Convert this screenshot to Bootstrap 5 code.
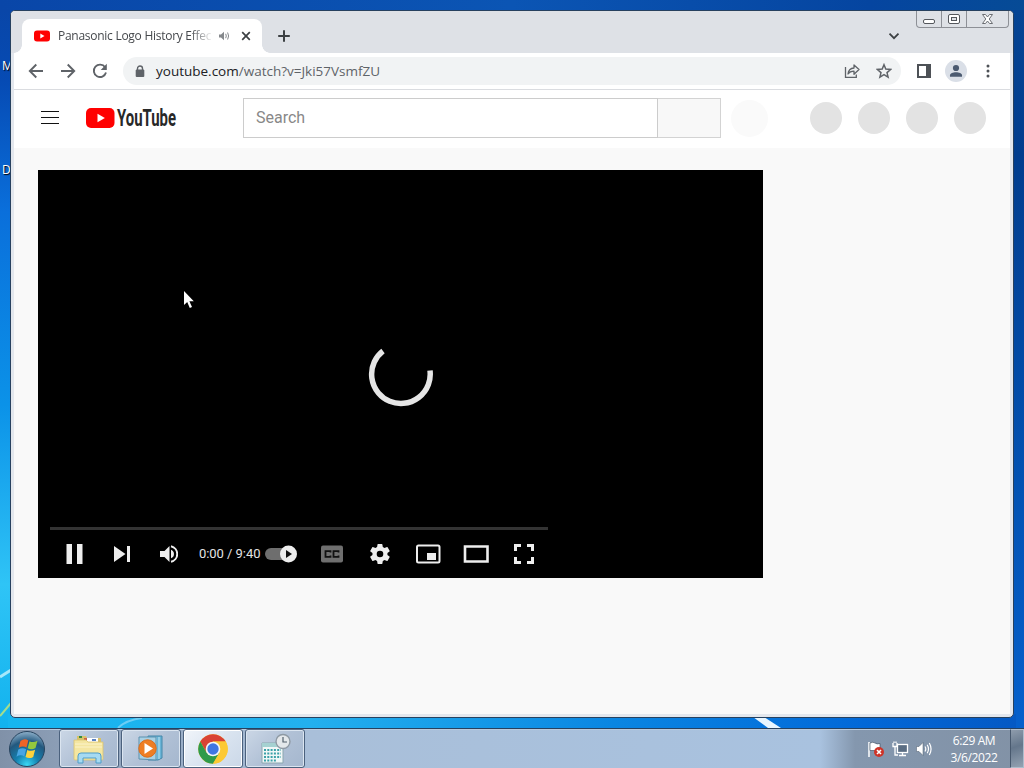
<!DOCTYPE html>
<html lang="en">
<head>
    <meta charset="UTF-8">
    <meta name="viewport" content="width=device-width, initial-scale=1.0">
    <title>Panasonic Logo History Effects - YouTube</title>
    <link href="https://cdn.jsdelivr.net/npm/bootstrap@5.3.3/dist/css/bootstrap.min.css" rel="stylesheet" />
    <style>
        body {
            width: 1024px;
            height: 768px;
            overflow: hidden;
            background-color: #0757b8;
            font-family: "Open Sans", "Noto Sans", sans-serif;
            font-size: 12px;
        }

        svg {
            display: block;
            flex-shrink: 0;
        }

        .wallpaper,
        .pointer,
        .desk-label,
        .browser {
            position: absolute;
        }

        .wallpaper {
            left: 0;
            top: 0;
        }

        .desk-label {
            left: 2px;
            color: #fff;
            text-shadow: 1px 1px 1px #000;
        }

        /* Browser window */
        .browser {
            left: 10px;
            top: 10px;
            width: 1004px;
            height: 708px;
            padding: 0 3px 3px 3px;
            border: 1px solid #27415f;
            border-radius: 5px;
            background-color: #e3e7ed;
            overflow: hidden;
        }

        .tab-strip {
            height: 42px;
            margin: 0 -3px;
            padding: 8px 0 0 11px;
            background-color: #dee1e6;
        }

        .page-tab {
            position: relative;
            width: 240px;
            height: 34px;
            padding-left: 12px;
            background-color: #fff;
            border-radius: 8px 8px 0 0;
            color: #45484c;
        }

        /* flared bottom corners of the tab */
        .page-tab::before,
        .page-tab::after {
            content: "";
            position: absolute;
            bottom: 0;
            width: 8px;
            height: 8px;
        }

        .page-tab::before {
            left: -8px;
            background: radial-gradient(circle at 0 0, #dee1e6 7.5px, #fff 8px);
        }

        .page-tab::after {
            right: -8px;
            background: radial-gradient(circle at 100% 0, #dee1e6 7.5px, #fff 8px);
        }

        .tab-name {
            width: 153px;
            margin-left: 8px;
            overflow: hidden;
            white-space: nowrap;
            letter-spacing: -0.27px;
            -webkit-mask-image: linear-gradient(to right, #000 132px, transparent 155px);
            mask-image: linear-gradient(to right, #000 132px, transparent 155px);
        }

        .win-buttons {
            width: 93px;
            height: 17px;
            margin: -8px 4px 0 0;
            border: 1px solid #8d9096;
            border-top: 0;
            border-radius: 0 0 4px 4px;
        }

        .win-buttons div + div {
            border-left: 1px solid #8d9096;
        }

        .toolbar {
            height: 37px;
            padding-left: 6px;
            background-color: #fff;
            border-bottom: 1px solid #dadce0;
        }

        .tool {
            width: 32px;
            height: 28px;
            display: flex;
            align-items: center;
            justify-content: center;
        }

        .omnibox {
            width: 778px;
            height: 28px;
            margin: 0 7px;
            padding: 0 1px;
            border-radius: 14px;
            background-color: #f1f3f4;
            color: #5f6368;
            font-size: 13.5px;
        }

        .omnibox b {
            font-weight: 400;
            color: #202124;
        }

        /* Page header */
        .masthead {
            height: 58px;
            padding: 0 0 2px 27px;
            background-color: #fff;
        }

        .search-box {
            width: 415px;
            height: 40px;
            padding-left: 12px;
            border: 1px solid #ccc;
            font-family: Roboto, sans-serif;
            font-size: 16px;
            color: #888;
        }

        .search-go {
            width: 63px;
            height: 40px;
            border: 1px solid #d3d3d3;
            border-left: 0;
            background-color: #f8f8f8;
        }

        .mic {
            width: 37px;
            height: 37px;
            background-color: #fafafa;
        }

        .bubble {
            width: 32px;
            height: 32px;
            background-color: #e3e3e3;
        }

        .page-body {
            height: 566px;
            padding: 22px 24px;
            background-color: #f9f9f9;
        }

        /* Player */
        .player {
            width: 725px;
            height: 408px;
            padding: 0 12px;
            background-color: #000;
        }

        .spinner-area {
            height: 357px;
            padding-top: 52px;
        }

        .seek {
            width: 498px;
            height: 3px;
            background-color: #333;
        }

        .controls {
            width: 498px;
            height: 48px;
        }

        .control {
            width: 48px;
            display: flex;
            align-items: center;
            justify-content: center;
        }

        .clock-text {
            width: 66px;
            padding-left: 5px;
            font-family: Roboto, sans-serif;
            font-size: 13px;
            letter-spacing: -0.05px;
            white-space: nowrap;
            color: #e4e4e4;
        }

        .pointer {
            left: 183px;
            top: 290px;
        }

        /* Taskbar */
        .taskbar {
            height: 40px;
            border-top: 1px solid #27415f;
            background: linear-gradient(to right, #8091a8 0, #8c9eb6 60px, #a9bfd9 310px, #a9c2df 820px, #8497ae 855px, #8292a6 1024px);
            box-shadow: inset 0 1px 0 #b8cade;
        }

        .orb {
            width: 59px;
            padding-left: 8px;
        }

        .task {
            width: 60px;
            height: 39px;
            margin-right: 2px;
            border: 1px solid #4b617d;
            border-radius: 3px;
            background: linear-gradient(135deg, #cbd7e6 0, #b1c1d6 50%, #a5b7ce 100%);
            box-shadow: inset 0 0 0 1px #dbe5f0;
        }

        .task.current {
            background: linear-gradient(135deg, #f1f5fa 0, #dae4f0 50%, #cbd8e8 100%);
            box-shadow: inset 0 0 0 1px #fff;
        }

        .tray {
            gap: 6px;
            margin-right: 16px;
        }

        .date-time {
            width: 50px;
            margin-right: 11px;
            line-height: 17px;
            text-align: center;
            white-space: nowrap;
            color: #fff;
            letter-spacing: -0.4px;
        }

        .show-desktop {
            width: 14px;
            height: 39px;
            border: 1px solid #aebdcc;
            border-left-color: #47586d;
            background: linear-gradient(160deg, #8e9cac 0, #64768b 45%, #94a2b2 100%);
        }
    </style>
</head>
<body class="d-flex flex-column justify-content-end">

    <!-- Desktop -->
    <svg class="wallpaper" width="1024" height="728">
        <defs>
            <linearGradient id="deskLeft" x1="0" y1="0" x2="0" y2="1">
                <stop offset="0" stop-color="#0946a8" />
                <stop offset=".1" stop-color="#064bb4" />
                <stop offset=".28" stop-color="#0a6fdb" />
                <stop offset=".55" stop-color="#0b92e8" />
                <stop offset=".8" stop-color="#2fc4f6" />
                <stop offset="1" stop-color="#12b2ee" />
            </linearGradient>
            <linearGradient id="deskRight" x1="0" y1="0" x2="0" y2="1">
                <stop offset="0" stop-color="#064594" />
                <stop offset=".2" stop-color="#013d8e" />
                <stop offset=".7" stop-color="#0354b6" />
                <stop offset="1" stop-color="#0560cc" />
            </linearGradient>
            <linearGradient id="deskTop">
                <stop offset="0" stop-color="#0946a8" />
                <stop offset=".5" stop-color="#0b55b4" />
                <stop offset=".85" stop-color="#0545a0" />
                <stop offset="1" stop-color="#064b96" />
            </linearGradient>
            <linearGradient id="deskBottom">
                <stop offset="0" stop-color="#16b6f0" />
                <stop offset=".3" stop-color="#23b0ee" />
                <stop offset=".6" stop-color="#0a86e2" />
                <stop offset=".85" stop-color="#0268d8" />
                <stop offset="1" stop-color="#0459c4" />
            </linearGradient>
        </defs>
        <rect width="1024" height="12" fill="url(#deskTop)" />
        <rect y="10" width="14" height="718" fill="url(#deskLeft)" />
        <rect x="1010" y="10" width="14" height="718" fill="url(#deskRight)" />
        <rect x="8" y="714" width="1008" height="14" fill="url(#deskBottom)" />
        <path d="M0 677l11-7" stroke="#a5e8fb" stroke-width="3" />
        <path d="M0 716l11-13" stroke="#a4dd8d" stroke-width="2" />
        <path d="M753 717h11l17 11h-13z" fill="#e9f6ff" />
        <path d="M118 728q8-8 24-10" stroke="#6ccdf5" stroke-width="2" fill="none" />
    </svg>
    <div class="desk-label" style="top: 57px">M</div>
    <div class="desk-label" style="top: 161px">D</div>

    <!-- Browser window -->
    <div class="browser">
        <div class="tab-strip d-flex">
            <div class="page-tab d-flex align-items-center">
                <svg width="16" height="12" viewBox="0 0 16 12"><rect y=".5" width="16" height="11" rx="3" fill="#f00" /><path d="M6.3 3.6v4.8l4.2-2.4z" fill="#fff" /></svg>
                <div class="tab-name">Panasonic Logo History Effec</div>
                <svg style="margin-left: 7px" width="14" height="12" viewBox="0 0 14 12" fill="none" stroke="#85888c"><path d="M1 4.5h2l3-2.700v8.400l-3-2.700H1z" fill="#85888c" stroke="none" /><path d="M7.700 3.800q1.200 2.200 0 4.400M9.600 2.500q2 3.500 0 7" /></svg>
                <svg class="ms-2" width="12" height="12" viewBox="0 0 12 12"><path d="M2.200 2.200l7.600 7.600M9.800 2.200l-7.600 7.600" stroke="#3c4043" stroke-width="1.700" /></svg>
            </div>
            <svg class="ms-3 mt-2" width="12" height="18" viewBox="0 0 12 18"><path d="M6 3.200v11.600M.2 9h11.600" stroke="#3c4043" stroke-width="2" /></svg>
            <svg class="ms-auto me-3 mt-2" width="12" height="18" viewBox="0 0 12 18"><path d="M1.500 6.700L6 11.200l4.500-4.500" stroke="#3c4043" stroke-width="1.800" fill="none" /></svg>
            <div class="win-buttons d-flex">
                <div class="flex-fill d-flex justify-content-center"><svg width="24" height="16" fill="#fff" stroke="#54575c"><rect x="6.500" y="8.500" width="11" height="4" rx="1.500" /></svg></div>
                <div class="flex-fill d-flex justify-content-center"><svg width="24" height="16" fill="#fff" stroke="#54575c"><rect x="6.500" y="3.500" width="11" height="9" rx="1.500" /><rect x="9.500" y="6.500" width="5" height="3" fill="#dee1e6" /></svg></div>
                <div class="flex-fill d-flex justify-content-center"><svg width="41" height="16"><path d="M15.500 3.500h3l2 2.500 2-2.500h3l-3.300 4.500 3.300 4.500h-3l-2-2.500-2 2.500h-3l3.300-4.500z" fill="#fff" stroke="#6b6e73" /></svg></div>
            </div>
        </div>

        <div class="toolbar d-flex align-items-center">
            <div class="tool"><svg width="16" height="16" viewBox="0 0 16 16" fill="none" stroke="#5f6368" stroke-width="1.900"><path d="M15 8H2M8.300 1.500L1.800 8l6.500 6.500" /></svg></div>
            <div class="tool"><svg width="16" height="16" viewBox="0 0 16 16" fill="none" stroke="#5f6368" stroke-width="1.900"><path d="M1 8h13M7.700 1.500L14.200 8l-6.500 6.500" /></svg></div>
            <div class="tool"><svg width="16" height="16" viewBox="0 0 16 16" fill="none" stroke="#5f6368" stroke-width="1.900"><path d="M13.100 4.200A6.200 6.200 0 1 0 14 9.500" /><path d="M14.800.8v6.100H8.700z" fill="#5f6368" stroke="none" /></svg></div>
            <div class="omnibox d-flex align-items-center">
                <div class="tool"><svg width="10" height="13" viewBox="0 0 10 13"><path d="M2.500 5.500V3.500a2.500 2.500 0 0 1 5 0v2" fill="none" stroke="#5f6368" stroke-width="1.400" /><rect x=".7" y="4.500" width="8.600" height="7.500" rx="1" fill="#5f6368" /></svg></div>
                <div class="url"><b>youtube.com</b>/watch?v=Jki57VsmfZU</div>
                <div class="tool ms-auto"><svg width="16" height="16" viewBox="0 0 16 16" fill="none" stroke="#5f6368" stroke-width="1.300"><path d="M1.500 4v10.300h10.800V11.500" /><path d="M4 11q.5-5.500 6-6V2l5 4.600-5 4.600V8.100Q6 8 4 11z" stroke-linejoin="round" /></svg></div>
                <div class="tool"><svg width="16" height="16" viewBox="0 0 16 16"><path d="M8 1.700l1.800 4.400 4.800.4-3.600 3.100 1.100 4.600L8 11.700l-4.100 2.500L5 9.600 1.400 6.500l4.800-.4z" fill="none" stroke="#5f6368" stroke-width="1.500" /></svg></div>
            </div>
            <div class="tool"><svg width="14" height="14"><path d="M1 1h12v12H1z" fill="none" stroke="#4d5156" stroke-width="2" /><path d="M9 1h4v12H9z" fill="#4d5156" /></svg></div>
            <div class="tool"><svg width="22" height="22" viewBox="0 0 22 22"><circle cx="11" cy="11" r="11" fill="#dadfe7" /><circle cx="11" cy="8" r="3.100" fill="#4b5a70" /><path d="M5 16.700v-1.500c0-4 12-4 12 0v1.500z" fill="#4b5a70" /></svg></div>
            <div class="tool"><svg width="4" height="14" viewBox="0 0 4 14" fill="#4d5156"><circle cx="2" cy="2" r="1.500" /><circle cx="2" cy="7" r="1.500" /><circle cx="2" cy="12" r="1.500" /></svg></div>
        </div>

        <!-- Page -->
        <div class="masthead d-flex align-items-center">
            <svg width="18" height="14" viewBox="0 0 18 14"><path d="M0 .5h18M0 6.500h18M0 12.500h18" stroke="#111" /></svg>
            <svg width="157" height="28" viewBox="0 0 157 28">
                <rect x="27" y="4" width="28.500" height="20" rx="5" fill="#f00" />
                <path d="M38.500 9.700v8.600l7.400-4.300z" fill="#fff" />
                <text x="58" y="22" font-family="Roboto, sans-serif" font-size="23" font-weight="700" fill="#282828" textLength="59" lengthAdjust="spacingAndGlyphs">YouTube</text>
            </svg>
            <div class="search-box d-flex align-items-center" style="margin-left: 27px">Search</div>
            <div class="search-go"></div>
            <div class="mic rounded-circle" style="margin-left: 10px"></div>
            <div class="d-flex gap-3 ms-auto me-4">
                <div class="bubble rounded-circle"></div>
                <div class="bubble rounded-circle"></div>
                <div class="bubble rounded-circle"></div>
                <div class="bubble rounded-circle"></div>
            </div>
        </div>

        <div class="page-body">
            <div class="player">
                <div class="spinner-area d-flex align-items-center justify-content-center">
                    <svg width="66" height="66" viewBox="0 0 66 66"><path d="M15 9A29.300 29.300 0 1 0 62 28.500" fill="none" stroke="#e6e6e6" stroke-width="5.500" /></svg>
                </div>
                <div class="seek"></div>
                <div class="controls d-flex align-items-center">
                    <div class="control"><svg width="18" height="20" fill="#eee"><path d="M1.500 0H7v20H1.500zM12 0h5.500v20H12z" /></svg></div>
                    <div class="control"><svg width="18" height="16" fill="#eee"><path d="M1 0l11.500 8L1 16zM14 0h3v16h-3z" /></svg></div>
                    <div class="control"><svg class="me-1" width="20" height="20" viewBox="0 0 20 20" fill="#eee"><path d="M2 7v6h4.500l5 5V2l-5 5zM13 5.700v8.600a4.600 4.600 0 0 0 0-8.600z" /><path d="M13 2.200a8 8 0 0 1 0 15.600" fill="none" stroke="#eee" stroke-width="2" /></svg></div>
                    <div class="clock-text me-auto">0:00 / 9:40</div>
                    <svg style="margin-right: 11px" width="33" height="18" viewBox="0 0 33 18"><rect x="1" y="3" width="30" height="12" rx="6" fill="#6e6e6e" /><circle cx="24.500" cy="9" r="8.500" fill="#eee" /><path d="M22 5v8l6-4z" fill="#111" /></svg>
                    <div class="control"><svg width="22" height="18" viewBox="0 0 22 18"><rect width="22" height="17" y=".5" rx="2" fill="#6f6f6f" /><path d="M9.500 7.500V6.200H4.500v5.600h5v-1.300M17.500 7.500V6.200h-5v5.600h5v-1.300" fill="none" stroke="#111" stroke-width="1.800" /></svg></div>
                    <div class="control"><svg width="24" height="24" viewBox="0 0 24 24"><path d="M19.400 13a7.500 7.500 0 0 0 0-2l2.100-1.600a.5.5 0 0 0 .1-.7l-2-3.400a.5.5 0 0 0-.6-.2l-2.500 1a7.300 7.300 0 0 0-1.700-1L14.400 2.400a.5.5 0 0 0-.5-.4h-4a.5.5 0 0 0-.4.400L9.100 5.100c-.6.300-1.200.6-1.700 1l-2.500-1a.5.5 0 0 0-.6.2l-2 3.400c-.1.200-.1.500.1.700L4.500 11a7.500 7.500 0 0 0 0 2l-2.100 1.600a.5.5 0 0 0-.1.700l2 3.400c.1.200.4.300.6.200l2.500-1c.5.400 1.100.7 1.700 1l.4 2.700c0 .2.200.4.400.4h4c.3 0 .5-.2.500-.4l.4-2.700c.6-.3 1.200-.6 1.700-1l2.500 1c.2.100.5 0 .6-.2l2-3.400c.1-.2.100-.5-.1-.7zM12 15.300a3.300 3.300 0 1 1 0-6.600 3.300 3.300 0 0 1 0 6.600z" fill="#eee" /></svg></div>
                    <div class="control"><svg width="26" height="20"><rect x="2" y="1.500" width="22.500" height="17" rx="1.500" fill="none" stroke="#eee" stroke-width="2" /><path d="M12 9h9v7h-9z" fill="#eee" /></svg></div>
                    <div class="control"><svg width="26" height="18"><path d="M2 1.500h22.500v15H2z" fill="none" stroke="#eee" stroke-width="2.600" /></svg></div>
                    <div class="control"><svg width="20" height="20"><path d="M1.500 7V1.500H7M13 1.500h5.500V7M18.500 13v5.500H13M7 18.500H1.500V13" fill="none" stroke="#eee" stroke-width="3" /></svg></div>
                </div>
            </div>
        </div>
    </div>

    <svg class="pointer" width="13" height="20" viewBox="0 0 13 20"><path d="M1 1v14l3.200-3.100 2.600 6 2.200-1-2.600-5.700h4.400z" fill="#fff" /></svg>

    <!-- Taskbar -->
    <div class="taskbar position-relative d-flex align-items-center">
        <div class="orb">
            <svg width="38" height="38" viewBox="0 0 38 38">
                <defs>
                    <radialGradient id="orbFill" cx=".5" cy=".95" r=".95">
                        <stop offset="0" stop-color="#39d8f4" />
                        <stop offset=".35" stop-color="#1580af" />
                        <stop offset=".7" stop-color="#23587e" />
                        <stop offset="1" stop-color="#8fb1cb" />
                    </radialGradient>
                </defs>
                <circle cx="19" cy="19" r="17.500" fill="url(#orbFill)" stroke="#28445f" />
                <path d="M12.500 11q4-3 7.800-.6l-1.800 7.200q-3.600-2.200-7.800.2z" fill="#ee6427" />
                <path d="M21.500 11.200q3.800 2 8-.4l-2 7.200q-4 2.300-7.800.2z" fill="#94c83d" />
                <path d="M10.300 19.400q4.100-2.300 7.800-.2l-1.800 7.200q-3.800-2.400-7.800.3z" fill="#48a5e3" />
                <path d="M19.300 19.900q3.800 2 7.800-.2l-1.900 7.200q-4 2.300-7.700.1z" fill="#fdd23c" />
            </svg>
        </div>
        <div class="task d-flex align-items-center justify-content-center">
            <svg width="34" height="32" viewBox="0 0 34 32">
                <path d="M5 3h9l1 2h14v8H5z" fill="#d8c269" /><path d="M7 3h3v2H7z" fill="#368b3d" />
                <path d="M13 5h13v5H13z" fill="#fff" /><path d="M20 6h4v2h-4z" fill="#5b83c4" /><path d="M12 5h3v3h-3z" fill="#ce6046" />
                <path d="M2 7h12l2 2h15v17q0 1-1 1H3q-1 0-1-1z" fill="#f4e6a1" stroke="#d9c372" stroke-width=".8" />
                <path d="M3 11h27M3 14h27" stroke="#fbf3c9" />
                <path d="M6 30V23q0-3 3-3h17q3 0 3 3v7h-5v-5H11v5z" fill="#a6daf2" stroke="#4f9dc9" />
            </svg>
        </div>
        <div class="task d-flex align-items-center justify-content-center">
            <svg width="32" height="30" viewBox="0 0 32 30">
                <path d="M13 2h14v22l-4 2H13z" fill="#69b4d6" stroke="#4587a9" /><path d="M24 3v22M21 3v22" stroke="#c4e7f4" />
                <path d="M4 3h17v23L4 25z" fill="#a9d1e4" stroke="#5b91ae" />
                <circle cx="12.500" cy="14.500" r="8.700" fill="#ee7e24" stroke="#d96d1c" /><path d="M9.500 9v11l8.500-5.500z" fill="#fff" />
            </svg>
        </div>
        <div class="task current d-flex align-items-center justify-content-center">
            <svg width="30" height="30" viewBox="0 0 30 30">
                <circle cx="15" cy="15" r="14.700" fill="#fcc934" />
                <path d="M2.300 7.600A14.700 14.700 0 0 1 27.700 7.600H15L8.600 18.700z" fill="#d94235" />
                <path d="M2.300 7.600A14.700 14.700 0 0 0 15 29.700l6.400-11H8.600z" fill="#2f9a4b" />
                <path d="M15 7.600h12.700A14.700 14.700 0 0 1 15 29.700l6.400-11z" fill="#fcc934" />
                <circle cx="15" cy="15" r="7.300" fill="#f4f6f8" /><circle cx="15" cy="15" r="5.700" fill="#4076e3" />
            </svg>
        </div>
        <div class="task d-flex align-items-center justify-content-center">
            <svg width="32" height="32" viewBox="0 0 32 32">
                <path d="M3 10h21v20H3z" fill="#f0f7f7" stroke="#8ba6af" /><path d="M3 10h21v4H3z" fill="#a5d1d1" />
                <path d="M5 17h17M5 20.500h17M5 24h17M5 27.500h12" stroke="#3ba1a8" stroke-width="2" stroke-dasharray="2 1.300" />
                <circle cx="24" cy="8.500" r="7" fill="#e4e8eb" stroke="#8f9aa4" stroke-width="1.400" /><path d="M24 4v5h4" fill="none" stroke="#53616d" stroke-width="1.200" />
            </svg>
        </div>
        <div class="tray d-flex ms-auto">
            <svg width="18" height="18" viewBox="0 0 18 18"><path d="M2 2v15" stroke="#fff" stroke-width="1.500" /><path d="M3 3q3-1.500 5 0t5 .5v7H3z" fill="#fff" stroke="#364659" stroke-width=".6" /><circle cx="12" cy="12" r="5" fill="#ce3428" /><path d="M10 10l4 4M14 10l-4 4" stroke="#fff" stroke-width="1.600" /></svg>
            <svg width="18" height="18" viewBox="0 0 18 18" fill="none" stroke="#fff" stroke-width="1.300"><rect x="6.500" y="4.500" width="10" height="8" fill="#5a6d83" /><path d="M8 15.500h7M11.500 13v2M2 3v3.500h4V3M3 1.500V3M5 1.500V3M4 7v8h3" /></svg>
            <svg width="18" height="18" viewBox="0 0 18 18" fill="none" stroke="#fff" stroke-width="1.200"><path d="M1.500 6.500h2.500L8 2.500v13l-4-4H1.500z" fill="#fff" stroke="#49596b" stroke-width=".5" /><path d="M10 6.500q1.600 2.500 0 5M12.200 4.800q2.600 4.200 0 8.400M14.300 3q3.500 6 0 12" /></svg>
        </div>
        <div class="date-time">6:29 AM<br>3/6/2022</div>
        <div class="show-desktop"></div>
    </div>

    <script src="https://cdn.jsdelivr.net/npm/bootstrap@5.3.3/dist/js/bootstrap.bundle.min.js"></script>
</body>
</html>
